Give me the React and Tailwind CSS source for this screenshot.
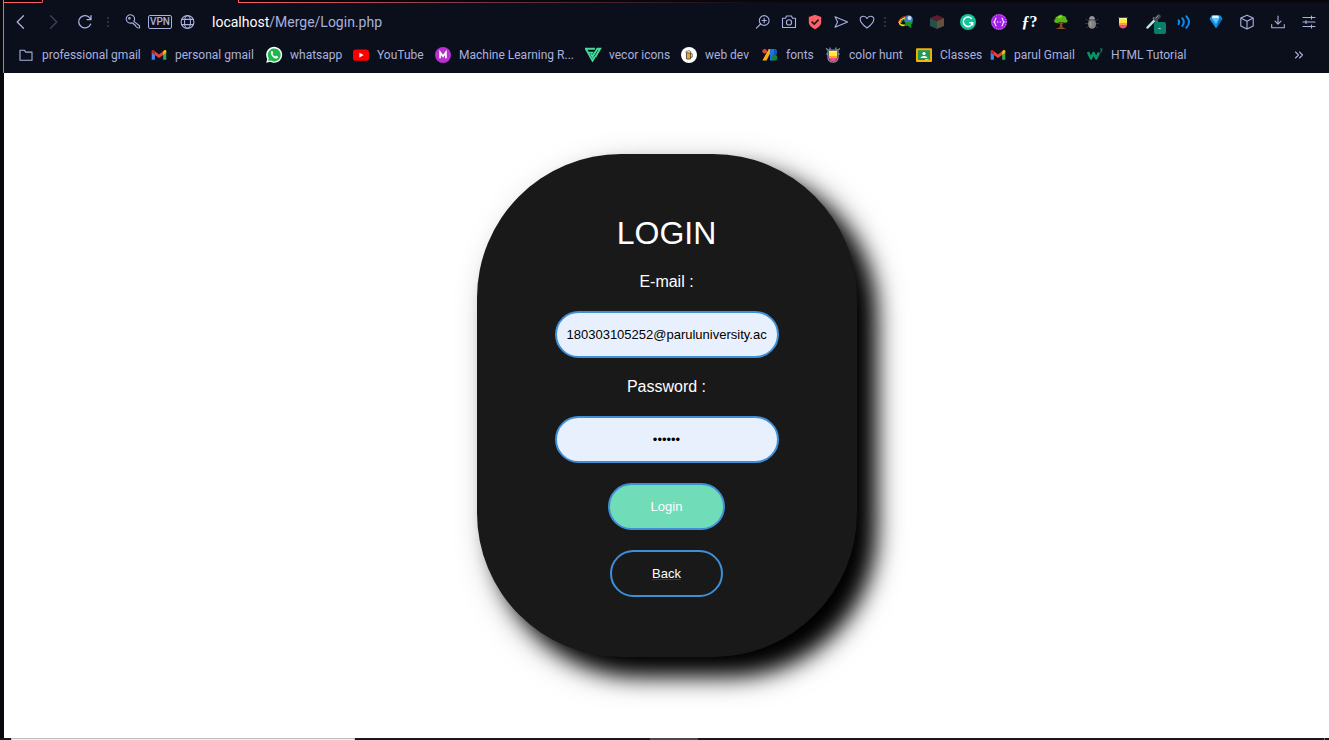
import React from "react";

const line = { fill: "none", stroke: "currentColor", strokeWidth: 1.1, strokeLinecap: "round", strokeLinejoin: "round" };

function Icon({ size = 16, children }) {
  return (
    <svg width={size} height={size} viewBox="0 0 16 16" aria-hidden="true" className="shrink-0 overflow-visible">
      {children}
    </svg>
  );
}

const BackIcon = () => <Icon><path {...line} strokeWidth="1.3" d="M11.5 1.8 5.2 8l6.3 6.2" /></Icon>;
const ForwardIcon = () => <Icon><path {...line} strokeWidth="1.3" d="M6.5 1.8 12.8 8l-6.3 6.2" /></Icon>;
const ReloadIcon = () => (
  <Icon>
    <path {...line} strokeWidth="1.3" d="M14.6 10.2A6.2 6.2 0 1 1 14.2 4.5L15 5.6M15 1.6v4h-4" />
  </Icon>
);
const Dots = () => (
  <svg width="4" height="12" viewBox="0 0 4 12" aria-hidden="true" className="shrink-0">
    <path fill="#2c2f3f" d="M1 1h2v2H1zM1 5h2v2H1zM1 9h2v2H1z" />
  </svg>
);
const KeyIcon = () => (
  <Icon>
    <g {...line}>
      <path d="M9.800 7.400A4.200 4.200 0 1 0 7.800 8.900l1.700.3.4 1.400 1.400.4.5 1.300 1.500 1.400 2.300.3-.1-2.300z" />
      <circle cx="5.400" cy="4.300" r=".8" />
    </g>
  </Icon>
);
const GlobeIcon = () => (
  <Icon>
    <g {...line}>
      <circle cx="7.500" cy="8" r="6.400" />
      <ellipse cx="7.500" cy="8" rx="3" ry="6.400" />
      <path d="M1.800 5.400h11.400M1.800 10.600h11.400" />
    </g>
  </Icon>
);
const ZoomIcon = () => (
  <Icon>
    <g {...line}>
      <circle cx="9.2" cy="6.5" r="4.9" />
      <path d="M5.6 10 1.4 14.2M9.2 4.3v4.4M7 6.5h4.4" />
    </g>
  </Icon>
);
const CameraIcon = () => (
  <Icon>
    <g {...line}>
      <path d="M1.5 4.2h3l1-2.2h5l1 2.2h3v9.3h-13z" />
      <circle cx="8" cy="8.4" r="2.6" />
    </g>
  </Icon>
);
const ShieldIcon = () => (
  <Icon>
    <path fill="#ff6168" d="M8 .8 14.2 3v5.2c0 3.4-3.4 5.7-6.2 7-2.800-1.300-6.200-3.600-6.200-7V3z" />
    <path fill="none" stroke="#20131c" strokeWidth="1.6" d="m4.600 7.600 2.600 2.500 4.400-4.500" />
  </Icon>
);
const SendIcon = () => (
  <Icon><path {...line} d="M2 2.800 14.600 8 2 13.300 4.600 8z" /></Icon>
);
const HeartIcon = () => (
  <Icon>
    <path {...line} d="M8 14C5 11.600 1.200 9 1.200 5.400 1.200 3.500 2.700 2.200 4.400 2.200 6 2.200 7.300 3 8 4.500c.7-1.500 2-2.300 3.600-2.300 1.700 0 3.200 1.300 3.200 3.200C14.800 9 11 11.600 8 14z" />
  </Icon>
);
const DownloadManagerIcon = () => (
  <Icon>
    <circle cx="10.500" cy="5.700" r="4.400" fill="#3c7fc4" />
    <circle cx="11.500" cy="4" r="2" fill="#cfe0f5" />
    <path fill="none" stroke="#d9352a" strokeWidth="1" d="M7 2.200C3 3.500.4 6 .6 9" />
    <path fill="none" stroke="#f2d426" strokeWidth="1.700" d="M7 3.700C3.500 4.800 1.300 7.300 1.800 9.500c.6 1.800 3.200 2.200 5.200 1.500" />
    <path fill="none" stroke="#3aa845" strokeWidth="1" d="M7 5.200C4.500 6 3 7.800 3.300 9" />
    <path fill="#189a1f" d="M6.500 7.500 15.500 8.600l-2.300 1.700.2 4-3.600-2.500-4.300.5 2.200-2z" />
  </Icon>
);
const BlocksIcon = () => (
  <Icon>
    <path fill="#641a2c" d="M8 1 15 4 8 7 1 4z" />
    <path fill="#264f48" d="M1 4l7 3v8l-7-3z" />
    <path fill="#62533f" d="M15 4 8 7v8l7-3z" />
  </Icon>
);
const GrammarIcon = () => (
  <Icon>
    <circle cx="8" cy="8" r="8" fill="#15c39a" />
    <path fill="none" stroke="#fff" strokeWidth="1.500" d="M11.700 4.800A4.700 4.700 0 1 0 12.600 8.800H9.200M12.600 8.800v2.800" />
  </Icon>
);
const BracesIcon = () => (
  <Icon>
    <circle cx="8" cy="8" r="8" fill="#a41be8" />
    <path fill="none" stroke="#fff" strokeWidth="1.100" d="M5.600 4C3.500 4 5 7 3 8c2 1 .5 4 2.600 4M10.400 4C12.500 4 11 7 13 8c-2 1-.5 4-2.600 4M5.900 8h1.400M8.700 8h1.400" />
    <circle cx="8" cy="8" r="7.200" fill="none" stroke="#dc9df7" strokeWidth=".9" strokeDasharray="1 1.200" />
  </Icon>
);
const TreeIcon = () => (
  <Icon>
    <path fill="#8a4a20" d="M7.200 8h1.800l.5 5.200 4 1.800H2.500l4.200-1.800z" />
    <path fill="none" stroke="#8a4a20" d="M8 10.500 5 8.500M8.300 10.500l3-2.500" />
    <path fill="#55b515" d="M2 8.500C.5 7.500 1 5.500 2.500 5 2 3 4 2 5 2.300 5.500.3 9.500 0 10.300 2c2-.3 3.500 1.200 2.900 3 1.800.5 1.800 3 .2 3.600-1.600.6-2.600-.6-3.700-.4C8 8.400 7 7.500 5.800 8.400 4.500 9.300 3 9.300 2 8.500z" />
    <path fill="#93dd35" d="M4.500 3.800C6 1.200 8.500 1.400 9.500 3 7.500 3 6.500 5 4.500 3.800z" />
  </Icon>
);
const BugIcon = () => (
  <Icon>
    <path stroke="#3d4047" strokeWidth=".8" fill="none" d="M1.500 5 5 7M14.500 5 11 7M1 9.500h3.500M15 9.500h-3.500M2 14l3-2M14 14l-3-2" />
    <ellipse cx="8" cy="10" rx="4" ry="4.800" fill="#838383" />
    <path fill="#969696" d="M5 5.500c0-4.600 6-4.600 6 0z" />
    <path stroke="#54565a" strokeWidth=".9" d="M4.500 6h7" />
    <path stroke="#a9a9a9" d="M6.700 7.500v5" />
  </Icon>
);
const CrestIcon = ({ framed }) => (
  <Icon>
    {framed && (
      <path fill="none" stroke="#8b929b" strokeWidth="1.300" d="M1 1.500 3.500 3.200h9L15 1.500M3 3.500v7C3 16.600 13 16.600 13 10.500v-7M5 .5v2M11 .5v2M1.500 6.500 3 8M14.500 6.500 13 8" />
    )}
    <path fill="#f7f1ad" d="M4 4h8v2H4z" />
    <path fill="#ffe83b" d="M4 5h8v4H4z" />
    <path fill="#ff9d3d" d="M4 9h8v2H4z" />
    <path fill="#f04d8e" d="M4 11h8c0 2-2 3.500-4 3.500S4 13 4 11z" />
    {!framed && <path stroke="#4c3a42" d="M3 3.500h10" />}
  </Icon>
);
const PickerIcon = () => (
  <Icon>
    <path stroke="#b8ece0" strokeWidth="2.500" strokeLinecap="round" d="m1.500 13.500 7-7.200" />
    <path stroke="#687079" strokeWidth="2.200" d="m7 3.500 4.500 4.500" />
    <path stroke="#42474e" strokeWidth="4" strokeLinecap="round" d="m10 5 2.800-2.700" />
    <path stroke="#8d949b" strokeWidth="1" strokeLinecap="round" d="m10 4 2.300-2.300" />
  </Icon>
);
const WavesIcon = () => (
  <Icon>
    <g fill="none" stroke="#078df5" strokeLinecap="round" strokeWidth="2">
      <path d="M1.500 6.200Q2.900 8 1.500 10.200M5.300 4.200Q8.300 8 5.300 12M9.300 2.200Q14.700 8 9.300 13.800" />
    </g>
  </Icon>
);
const GemIcon = () => (
  <Icon>
    <path fill="#128fe2" d="M3.500 1.500h9L14.500 5 8 14.500 1.500 5z" />
    <path fill="#dff5ff" d="M4.500 1.500h6l.5 3H4z" />
    <path fill="#66c6fa" d="M4 4.500h7L8 10z" />
    <path fill="#0769b8" d="M11.500 5h3L8 14.500z" />
  </Icon>
);
const CubeIcon = () => (
  <Icon><path {...line} d="M8 1.200 14.200 4v8L8 15 1.800 12V4zM1.800 4 8 7.300 14.200 4M8 7.300V15" /></Icon>
);
const DownloadIcon = () => (
  <Icon><path {...line} d="M8 2v8M5 7.200 8 10.200l3-3M1.700 10.500v3.300h12.600v-3.300" /></Icon>
);
const SettingsIcon = () => (
  <Icon><path {...line} d="M2 3.500h12M2 8h12M2 12.500h12M10.500 2v3M5 6.500v3M10.500 11v3" /></Icon>
);

const FolderIcon = () => (
  <Icon><path {...line} d="M2 3.200h4.200l1.600 1.900H14v8.200H2z" /></Icon>
);
const GmailIcon = () => (
  <Icon>
    <path fill="#4285f4" d="M.7 4.500v8.300h3.200V6z" />
    <path fill="#34a853" d="M15.300 4.500v8.300h-3.200V6z" />
    <path fill="#c5221f" d="M.7 3.900v1.700l3.200 2.400V4.200L2.800 3.300C1.900 2.700.7 3.200.7 3.900z" />
    <path fill="#ea4335" d="M3.900 4.200 8 7.400l4.100-3.200V8L8 11.100 3.900 8z" />
    <path fill="#fbbc04" d="M15.300 3.900v1.700L12.100 8V4.200l1.100-.9c.9-.6 2.100-.1 2.100.6z" />
  </Icon>
);
const WhatsappIcon = () => (
  <Icon>
    <path fill="#fff" d="M.2 15.800 1.300 11.900A8 8 0 1 1 4.300 14.800z" />
    <path fill="#20b84e" d="m2 14.100.8-2.600a6.500 6.500 0 1 1 2.100 2z" />
    <path fill="#fff" d="M5.300 4.200c.4-.4 1-.3 1.200.1l.6 1.400c.2.400-.6 1-.6 1.300.5 1.100 1.500 2 2.600 2.500.4.100.9-.9 1.300-.7l1.400.7c.5.300.2 1.200-.2 1.600-2.300 1.900-8-2.600-6.300-6.900z" />
  </Icon>
);
const YoutubeIcon = () => (
  <Icon>
    <rect x="0" y="2.500" width="16" height="11.200" rx="2.800" fill="#f00" />
    <path fill="#fff" d="M6.400 5.700 10.700 8.100l-4.300 2.400z" />
  </Icon>
);
const MediumIcon = () => (
  <Icon>
    <circle cx="8" cy="8" r="8" fill="#b92fd0" />
    <path fill="none" stroke="#fff" strokeWidth="1.700" d="M5.100 11.300V5.400L8 9.300l2.900-3.900v5.900" />
  </Icon>
);
const VectorIcon = () => (
  <Icon>
    <path fill="none" stroke="#44dc9b" strokeWidth="1.900" d="M0 1.700h10M2.800 5.600h5.700M.7 1.500l6.800 12.200 2.500-4.200" />
    <path fill="none" stroke="#44dc9b" strokeWidth="1.900" d="M6 6.500 7.600 9.600 12.400 1.700h2.800L10.300 10" />
  </Icon>
);
const MugIcon = () => (
  <Icon>
    <circle cx="8" cy="8" r="8" fill="#fff" />
    <path fill="#e9a829" stroke="#4a3a25" strokeWidth=".8" d="M5.500 5.500h4V12h-4z" />
    <path fill="#fff6cf" stroke="#4a3a25" strokeWidth=".7" d="M5 5.800c-.5-1.600.8-2.100 1.600-1.600.9-.9 2.700-.4 3.200.6v1.300z" />
    <path fill="none" stroke="#4a3a25" strokeWidth=".8" d="M9.700 6.800h1.500v3.400H9.700" />
  </Icon>
);
const FontsIcon = () => (
  <Icon>
    <circle cx="2.700" cy="4.200" r="2.300" fill="#ea4335" />
    <path fill="#fbab13" d="M6.700 2h3.600L4.600 13.500H.4z" />
    <path fill="#1a73e8" d="M8 2h4a3 3 0 0 1 0 6v5.500H8z" />
    <path fill="#1557b0" d="M12 2v6a3 3 0 0 0 0-6z" />
    <circle cx="12.500" cy="10.700" r="2.900" fill="#188038" />
  </Icon>
);
const ClassroomIcon = () => (
  <Icon>
    <rect x="0" y="1.300" width="16" height="13.600" rx="1" fill="#f4b400" />
    <rect x="1.900" y="3.200" width="12.200" height="9.800" fill="#24975b" />
    <circle cx="8" cy="6.500" r="1.600" fill="#fff" />
    <path fill="#fff" d="M4.500 11c.3-2.800 6.700-2.800 7 0z" />
    <path fill="#e8e8e8" d="M9 12.200h3.600v.8H9z" />
  </Icon>
);
const SchoolIcon = () => (
  <Icon>
    <path fill="none" stroke="#059862" strokeWidth="2.600" strokeLinejoin="round" d="M1 5 4 11.500l2.500-5.500 2.700 5.500 2.800-6" />
    <path fill="none" stroke="#059862" strokeWidth="1" d="M13 2h2.200l-1 1.400c1.600.1 1.100 2-1.300 1.500" />
  </Icon>
);

const bookmarks = [
  ["professional gmail", FolderIcon],
  ["personal gmail", GmailIcon],
  ["whatsapp", WhatsappIcon],
  ["YouTube", YoutubeIcon],
  ["Machine Learning R...", MediumIcon],
  ["vecor icons", VectorIcon],
  ["web dev", MugIcon],
  ["fonts", FontsIcon],
  ["color hunt", () => <CrestIcon framed />],
  ["Classes", ClassroomIcon],
  ["parul Gmail", GmailIcon],
  ["HTML Tutorial", SchoolIcon],
];

const pageActions = [
  ["Zoom", ZoomIcon],
  ["Snapshot", CameraIcon],
  ["Ad blocker", ShieldIcon],
  ["Send page", SendIcon],
  ["Save to favourites", HeartIcon],
];

const FontFinder = () => (
  <span className="font-['Liberation_Serif',serif] text-base leading-4 font-bold text-white">
    <i>ƒ</i>?
  </span>
);
const PickerWithBadge = () => (
  <span className="relative block">
    <PickerIcon />
    <span className="absolute top-2 left-2 flex size-3 items-center justify-center rounded-xs bg-[#067f6c] text-[9px] leading-none text-white">-</span>
  </span>
);

const extensions = [
  ["Download manager", DownloadManagerIcon],
  ["Blocks", BlocksIcon],
  ["Grammar", GrammarIcon],
  ["JSON viewer", BracesIcon],
  ["Font finder", FontFinder],
  ["Tree", TreeIcon],
  ["Bug", BugIcon],
  ["Color palettes", () => <CrestIcon />],
  ["Color picker", PickerWithBadge],
  ["Sound", WavesIcon],
  ["Gem", GemIcon],
  ["Extensions", CubeIcon],
  ["Downloads", DownloadIcon],
  ["Easy setup", SettingsIcon],
];

function ToolButton({ label, className, children }) {
  return (
    <button type="button" aria-label={label} className={`flex h-6 shrink-0 items-center justify-center ${className}`}>
      {children}
    </button>
  );
}

function BrowserBar() {
  return (
    <header className="border-l border-[#ff6168] bg-[#0b0e1b] font-[Roboto,'Open_Sans',sans-serif] text-[#a9b1dd]">
      <div className="flex h-[3px] items-stretch">
        <div className="w-[39px] rounded-br-xs border-r border-b border-[#ff6168] bg-[#07080c]" />
        <div className="w-[195px]" />
        <div className="flex flex-1 flex-col border-l border-[#ff6168] bg-[#07080c]">
          <div className="flex-1" />
          <div className="h-px bg-linear-to-r from-[#ff6168] via-[#6b3040] via-25% to-[#0a0a10] to-50%" />
        </div>
      </div>
      <div className="flex h-[38px] items-center">
        <nav aria-label="Navigation" className="flex items-center">
          <ToolButton label="Back" className="w-8"><BackIcon /></ToolButton>
          <ToolButton label="Forward" className="w-8 text-[#41455c]"><ForwardIcon /></ToolButton>
          <ToolButton label="Reload" className="w-8"><ReloadIcon /></ToolButton>
          <span className="flex w-4 justify-center"><Dots /></span>
          <ToolButton label="Passwords" className="w-8"><KeyIcon /></ToolButton>
          <button type="button" className="h-[14px] w-6 rounded-xs border border-[#a9b1dd] text-center text-[10px] leading-3 font-medium">VPN</button>
          <ToolButton label="Site information" className="w-8"><GlobeIcon /></ToolButton>
        </nav>
        <div className="ml-2 flex-1 text-sm whitespace-nowrap">
          <span className="text-white">localhost</span>/Merge/Login.php
        </div>
        <div className="flex items-center pr-[5px]">
          {pageActions.map(([label, Glyph]) => (
            <ToolButton key={label} label={label} className="w-[26px]"><Glyph /></ToolButton>
          ))}
          <span className="flex w-[10px] justify-center"><Dots /></span>
          {extensions.map(([label, Glyph]) => (
            <ToolButton key={label} label={label} className="w-[31px]"><Glyph /></ToolButton>
          ))}
        </div>
      </div>
      <div className="flex h-8 items-center justify-between pr-[25px] pb-1 pl-[14px]">
        <nav
          aria-label="Bookmarks"
          className="grid grid-cols-[133px_115px_87px_82px_150px_96px_81px_63px_91px_74px_97px_auto] items-center text-xs whitespace-nowrap"
        >
          {bookmarks.map(([name, Glyph]) => (
            <a key={name} href="#" className="flex items-center gap-2">
              <Glyph />
              {name}
            </a>
          ))}
        </nav>
        <button type="button" aria-label="More bookmarks">
          <svg width="10" height="10" viewBox="0 0 10 10" aria-hidden="true"><path {...line} d="m1.500 2 3 3-3 3m4-6 3 3-3 3" /></svg>
        </button>
      </div>
    </header>
  );
}

const field =
  "h-[47px] w-56 rounded-full border-2 border-[#3f8fd8] bg-[#e8f0fe] px-[10px] text-center text-[13px] text-black outline-none";

function LoginCard() {
  return (
    <form
      onSubmit={(e) => e.preventDefault()}
      className="mt-[81px] flex w-[380px] flex-col items-center rounded-[144px] bg-[#191919] pt-[61px] pb-[60px] font-['Liberation_Sans',sans-serif] text-white shadow-[18px_18px_22px_#000,15px_15px_36px_rgba(0,0,0,0.4)]"
    >
      <h1 className="text-[32px] leading-9">LOGIN</h1>
      <label htmlFor="email" className="mt-[22px] text-base leading-[18px]">E-mail :</label>
      <input id="email" type="email" defaultValue="180303105252@paruluniversity.ac.in" className={`${field} mt-5`} />
      <label htmlFor="password" className="mt-5 text-base leading-[18px]">Password :</label>
      <input id="password" type="password" defaultValue="secret" className={`${field} mt-5`} />
      <button type="submit" className="mt-5 h-[47px] rounded-full border-2 border-[#3f8fd8] bg-[#70dcb8] px-[41px] text-[13px]">Login</button>
      <a href="#" className="mt-5 flex h-[47px] items-center rounded-full border-2 border-[#3f8fd8] px-10 text-[13px] underline decoration-[#551a8b]">Back</a>
    </form>
  );
}

export default function App() {
  return (
    <div className="flex min-h-screen flex-col bg-[#07080c]">
      <div className="flex flex-1 flex-col pl-[3px]">
        <BrowserBar />
        <main className="ml-px flex flex-1 flex-col items-center bg-white">
          <LoginCard />
        </main>
      </div>
      <footer className="flex h-[2px] bg-[#18181b] pl-[11px]">
        <div className="w-[344px] border border-b-0 border-[#bdbdbd] bg-[#f2f2f2]" />
        <div className="ml-[295px] w-12 bg-[#4a4a4d]" />
        <div className="mr-1 ml-auto w-px bg-[#77777a]" />
      </footer>
    </div>
  );
}
